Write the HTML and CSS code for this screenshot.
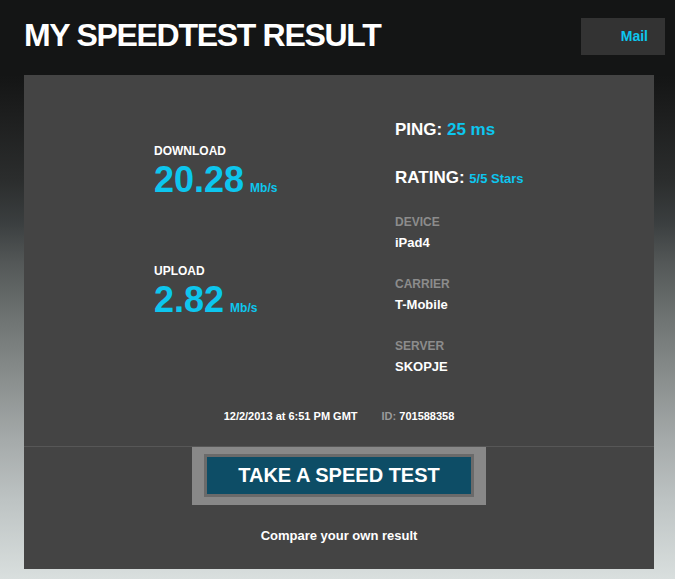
FILE: index.html
```html
<!DOCTYPE html>
<html lang="en">
<head>
  <meta charset="UTF-8" />
  <title>My Speedtest Result</title>
  <link rel="stylesheet" href="styles.css">
</head>
<body>
  <div class="header">
    <h1>MY SPEEDTEST RESULT</h1>
    <a class="mail" href="#">Mail</a>
  </div>

  <div class="card">
    <div class="stats">
      <div class="speeds">
        <div class="label">DOWNLOAD</div>
        <div class="speed">20.28<span class="unit">Mb/s</span></div>

        <div class="label upload">UPLOAD</div>
        <div class="speed">2.82<span class="unit">Mb/s</span></div>
      </div>

      <div class="details">
        <div class="big">PING: <span class="hl">25 ms</span></div>
        <div class="big rating">RATING: <span class="hl small">5/5 Stars</span></div>

        <!-- device info -->
        <div class="group">
          <div class="key">DEVICE</div>
          <div class="val">iPad4</div>
        </div>
        <div class="group">
          <div class="key">CARRIER</div>
          <div class="val">T-Mobile</div>
        </div>
        <div class="group">
          <div class="key">SERVER</div>
          <div class="val">SKOPJE</div>
        </div>
      </div>
    </div>

    <div class="meta">12/2/2013 at 6:51 PM GMT<span class="id"><span class="dim">ID:</span> 701588358</span></div>

    <div class="cta">
      <div class="frame">
        <a class="btn" href="#">TAKE A SPEED TEST</a>
      </div>
      <div class="compare">Compare your own result</div>
    </div>
  </div>
</body>
</html>
```

FILE: styles.css
```css
* {
  margin: 0;
  padding: 0;
  box-sizing: border-box;
}
body {
  font-family: 'Liberation Sans', Arial, sans-serif;
  font-weight: bold;
  color: #fff;
  min-height: 579px;
  background: linear-gradient(#141515 0, #141515 75px, #1c1d1d 110px, #2b2d2d 180px, #3a3e3f 222px, #535757 262px, #6f7473 320px, #8a8f8e 380px, #a5aaaa 440px, #bdc3c3 500px, #d9dfde 579px);
}
a {
  text-decoration: none;
}
.header {
  display: flex;
  justify-content: space-between;
  align-items: flex-start;
  padding: 17px 10px 0 24px;
}
.header h1 {
  font-size: 32px;
  line-height: 37px;
  letter-spacing: -1.3px;
}
.mail {
  margin-top: 1px;
  width: 84px;
  height: 37px;
  line-height: 37px;
  padding-right: 17px;
  text-align: right;
  background: #333;
  color: #0dc6ee;
  font-size: 14px;
}
.card {
  margin: 20px 21px 0 24px;
  padding-top: 45px;
  background: #444;
}
.stats {
  display: flex;
  padding-left: 130px;
}
.speeds {
  width: 241px;
  padding-top: 24px;
}
.label {
  font-size: 12px;
  line-height: 14px;
}
.label.upload {
  margin-top: 64px;
}
.speed {
  margin-top: 2px;
  font-size: 36px;
  line-height: 40px;
  color: #0dc6ee;
}
.unit {
  font-size: 12px;
  line-height: 1;
  margin-left: 6px;
}
.big {
  font-size: 17px;
  line-height: 20px;
}
.rating {
  margin-top: 28px;
}
.hl {
  color: #0dc6ee;
}
.hl.small {
  font-size: 13px;
  line-height: 1;
}
.group {
  margin-top: 27px;
}
.group + .group {
  margin-top: 26px;
}
.key {
  font-size: 12px;
  line-height: 14px;
  color: #8c8c8c;
}
.val {
  margin-top: 6px;
  font-size: 13px;
  line-height: 16px;
}
.meta {
  margin: 35px 0 23px;
  font-size: 11px;
  line-height: 13px;
  text-align: center;
}
.id {
  margin-left: 24px;
}
.dim {
  color: #999;
}
.cta {
  border-top: 1px solid #575757;
  padding-bottom: 25px;
  text-align: center;
}
.frame {
  width: 294px;
  margin: 0 auto;
  padding: 7px 12px 8px;
  background: #888;
}
.btn {
  display: block;
  height: 43px;
  line-height: 37px;
  border: 3px solid #6a6a6a;
  background: #0d4d66;
  color: #fff;
  font-size: 20px;
}
.compare {
  margin-top: 23px;
  font-size: 13px;
  line-height: 16px;
}
```
